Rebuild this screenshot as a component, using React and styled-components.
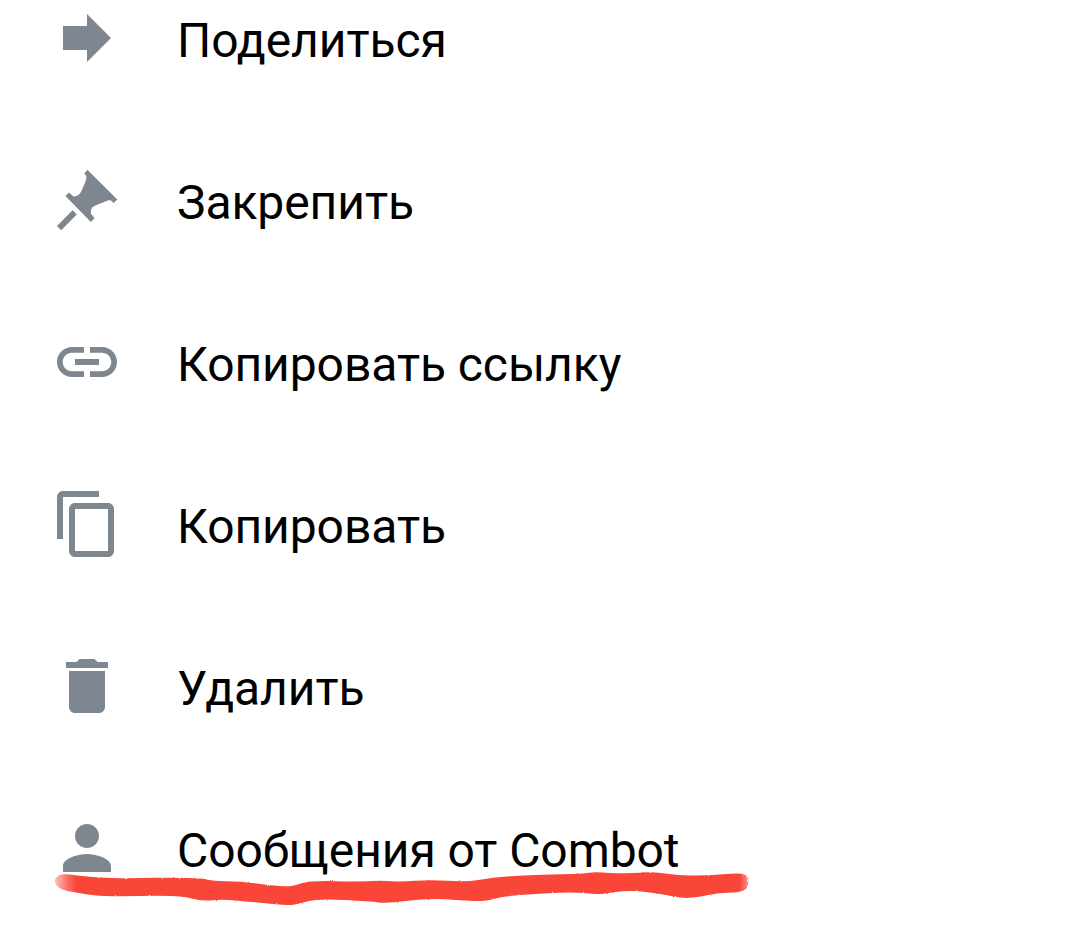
import React from "react";
import styled, { createGlobalStyle } from "styled-components";

const GlobalStyle = createGlobalStyle`
  body { margin: 0; background: #fff; overflow: hidden; }
`;
const Sheet = styled.main`
  position: relative;
  box-sizing: border-box;
  width: 1080px;
  height: 925px;
  overflow: hidden;
  background: #fff;
`;
const Menu = styled.ul`
  display: flex;
  flex-direction: column;
  margin: -43px 0 0;
  padding: 0;
  list-style: none;
`;
const Item = styled.li`
  display: flex;
  flex: none;
  align-items: center;
  height: 162px;
  padding-left: 51px;
  gap: 54px;
`;
const Icon = styled.svg`
  flex: none;
  width: 72px;
  height: 72px;
  fill: #7e868f;
`;
const Label = styled.span`
  font: 400 48px/56px Roboto, "Noto Sans", sans-serif;
  letter-spacing: -0.07px;
  color: #000;
  white-space: nowrap;
  padding-top: 5px;
`;
const Marker = styled.svg`
  position: absolute;
  left: 0;
  top: 860px;
  width: 800px;
  height: 60px;
`;

const items = [
  { label: "Поделиться", d: "M4 8h8V4l8 8-8 8v-4H4z" },
  { label: "Закрепить", d: "M12.2 2L11.1 3.1L11.8 4.1Q11.9 4.8 11.5 5.8L10.2 8.9Q9.6 10.3 8.7 10.6L7.6 10.9L6 9.5L4.8 10.7L13.3 19.3L14.5 18.1L13.3 16.5V15.4Q13.4 14.4 14.4 14L18.3 12.4Q19.4 11.9 20 12.2L20.9 13L22.1 11.8zM7.2 15.4L8.6 16.8L3.4 22.1L2 20.7z" },
  { label: "Копировать ссылку", d: "M3.9 12c0-1.71 1.39-3.1 3.1-3.1h4V7H7c-2.76 0-5 2.24-5 5s2.24 5 5 5h4v-1.9H7c-1.71 0-3.1-1.39-3.1-3.1zM8 13h8v-2H8v2zm9-6h-4v1.9h4c1.71 0 3.1 1.39 3.1 3.1s-1.39 3.1-3.1 3.1h-4V17h4c2.76 0 5-2.24 5-5s-2.24-5-5-5z" },
  { label: "Копировать", d: "M16 1H4c-1.1 0-2 .9-2 2v14h2V3h12V1zm3 4H8c-1.1 0-2 .9-2 2v14c0 1.1.9 2 2 2h11c1.1 0 2-.9 2-2V7c0-1.1-.9-2-2-2zm0 16H8V7h11v14z" },
  { label: "Удалить", d: "M6 19c0 1.1.9 2 2 2h8c1.1 0 2-.9 2-2V7H6v12zM19 4h-3.5l-1-1h-5l-1 1H5v2h14V4z" },
  { label: "Сообщения от Combot", d: "M12 12c2.21 0 4-1.79 4-4s-1.79-4-4-4-4 1.79-4 4 1.79 4 4 4zm0 2c-2.67 0-8 1.34-8 4v2h16v-2c0-2.66-5.33-4-8-4z" },
];

const outline = [
  [54, 882], [56, 877], [62, 873.5], [77, 875.7], [107, 878.3], [140, 878], [173, 877.7], [203, 878.3], [213, 881], [240, 881.3], [270, 885.3], [288, 886.5], [295, 885.5], [310, 880.7], [360, 881.7], [383, 880.5], [400, 882], [430, 879.7], [467, 882], [493, 877.3], [520, 875.7], [540, 874.7], [583, 873.7], [595, 871.7], [610, 873.3], [640, 873], [655, 871.7], [680, 876], [713, 875], [740, 873], [748.5, 876], [748, 889], [738, 892.6], [717, 893], [697, 897.3], [682, 898.3], [663, 894], [633, 890.3], [613, 892.3], [597, 894.7], [577, 892], [540, 893.3], [500, 896.7], [487, 901.3], [460, 900.7], [430, 898], [387, 903.5], [370, 901.3], [317, 898.7], [297, 904.5], [287, 905.3], [253, 902], [223, 899.3], [203, 901], [187, 897.3], [173, 895.7], [140, 895.7], [100, 896.7], [73, 892], [60, 889.3],
];

// Rounds the corners of a closed polygon by curving between edge midpoints.
const smooth = (points) => {
  const middle = (a, b) => [(a[0] + b[0]) / 2, (a[1] + b[1]) / 2];
  const start = middle(points[points.length - 1], points[0]);
  return `M${start}` + points.map((p, i) => `Q${p} ${middle(p, points[(i + 1) % points.length])}`).join("") + "Z";
};

export default function App() {
  return (
    <Sheet>
      <GlobalStyle />
      <Menu>
        {items.map(({ label, d }) => (
          <Item key={label}>
            <Icon viewBox="0 0 24 24" aria-hidden="true"><path d={d} /></Icon>
            <Label>{label}</Label>
          </Item>
        ))}
      </Menu>
      <Marker viewBox="0 860 800 60" aria-hidden="true">
        <defs>
          <linearGradient id="ink" gradientUnits="userSpaceOnUse" x1="54" y1="0" x2="748" y2="0">
            <stop offset="0" stopColor="#fa4638" stopOpacity="0.3" />
            <stop offset="0.02" stopColor="#fa4638" stopOpacity="0.8" />
            <stop offset="0.032" stopColor="#fa4638" />
            <stop offset="0.988" stopColor="#fa4638" />
            <stop offset="1" stopColor="#fa4638" stopOpacity="0.6" />
          </linearGradient>
          <filter id="rough" filterUnits="userSpaceOnUse" x="40" y="860" width="720" height="60" colorInterpolationFilters="sRGB">
            <feTurbulence type="fractalNoise" baseFrequency="0.6" numOctaves="2" seed="4" result="noise" />
            <feGaussianBlur in="SourceGraphic" stdDeviation="0.4" result="soft" />
            <feDisplacementMap in="soft" in2="noise" scale="2" xChannelSelector="R" yChannelSelector="G" />
          </filter>
        </defs>
        <path d={smooth(outline)} fill="url(#ink)" filter="url(#rough)" />
      </Marker>
    </Sheet>
  );
}
